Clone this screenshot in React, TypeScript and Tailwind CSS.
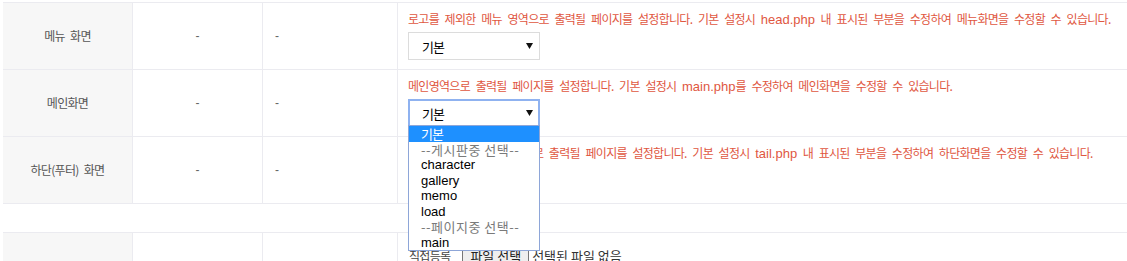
import React from "react";

const kr = "font-['Noto_Sans_CJK_KR',sans-serif]";

function L({ children }: { children: React.ReactNode }) {
  return <span className="font-['Liberation_Sans',sans-serif] text-[13px] tracking-normal [word-spacing:0px]">{children}</span>;
}

function Select({ focused }: { focused?: boolean }) {
  return (
    <div
      className={
        "flex h-[28px] w-[132px] items-center justify-between bg-white " +
        (focused ? "border-2 border-[#8fb2f0] pl-[12px] pr-[5px]" : "border border-[#dcdcdc] pl-[13px] pr-[6px]")
      }
    >
      <span className={`${kr} text-[13px] tracking-[-1px] text-black leading-none`}>기본</span>
      <svg width="7" height="6" viewBox="0 0 7 6">
        <path d="M0 0 L7 0 L3.5 6 Z" fill="#111" />
      </svg>
    </div>
  );
}

function Row({
  label,
  desc,
  focused,
}: {
  label: string;
  desc: React.ReactNode;
  focused?: boolean;
}) {
  return (
    <div className="flex h-[67px] border-b border-[#ebebf0]">
      <div
        className={`${kr} flex w-[130px] shrink-0 items-center justify-center border-r border-[#ebebf0] bg-[#f7f7f7] text-[12px] tracking-[-0.7px] [word-spacing:3.2px] text-[#555]`}
      >
        {label}
      </div>
      <div className="flex w-[130px] shrink-0 items-center justify-center border-r border-[#ebebf0] text-[12px] text-[#666] font-['Liberation_Sans',sans-serif]">
        -
      </div>
      <div className="flex w-[135px] shrink-0 items-center border-r border-[#ebebf0] pl-[12px] text-[12px] text-[#666] font-['Liberation_Sans',sans-serif]">
        -
      </div>
      <div className="flex flex-1 flex-col justify-center pl-[10px]">
        <div
          className={`${kr} whitespace-nowrap text-[12px] leading-[14px] tracking-[-0.7px] [word-spacing:3.6px] text-[#e0573f]`}
        >
          {desc}
        </div>
        <div className="mt-[5px]">
          <Select focused={focused} />
        </div>
      </div>
    </div>
  );
}

const options: { t: string; dim?: boolean; sel?: boolean; kr?: boolean }[] = [
  { t: "기본", sel: true, kr: true },
  { t: "--게시판중 선택--", dim: true, kr: true },
  { t: "character" },
  { t: "gallery" },
  { t: "memo" },
  { t: "load" },
  { t: "--페이지중 선택--", dim: true, kr: true },
  { t: "main" },
];

export default function App() {
  return (
    <div className="relative h-[261px] w-[1127px] overflow-hidden bg-white pl-[3px] pt-[2px]">
      <div className="border-t border-[#ebebf0]">
        <Row
          label="메뉴 화면"
          desc={
            <>
              로고를 제외한 메뉴 영역으로 출력될 페이지를 설정합니다. 기본 설정시 <L>head.php</L> 내 표시된 부분을 수정하여 메뉴화면을 수정할 수 있습니다.
            </>
          }
        />
        <Row
          label="메인화면"
          focused
          desc={
            <>
              메인영역으로 출력될 페이지를 설정합니다. 기본 설정시 <L>main.php</L>를 수정하여 메인화면을 수정할 수 있습니다.
            </>
          }
        />
        <Row
          label="하단(푸터) 화면"
          desc={
            <>
              로고를 제외한 하단영역으로 출력될 페이지를 설정합니다. 기본 설정시 <L>tail.php</L> 내 표시된 부분을 수정하여 하단화면을 수정할 수 있습니다.
            </>
          }
        />
      </div>
      <div className="mt-[28px] flex h-[67px] border-t border-[#ebebf0]">
        <div className="w-[130px] shrink-0 border-r border-[#ebebf0] bg-[#f7f7f7]" />
        <div className="w-[130px] shrink-0 border-r border-[#ebebf0]" />
        <div className="w-[135px] shrink-0 border-r border-[#ebebf0]" />
        <div className={`${kr} flex flex-1 items-start whitespace-nowrap pl-[11px] pt-[15px] leading-[15px] text-[#444]`}>
          <span className="text-[12px] tracking-[-0.7px]">직접등록</span>
          <span className="ml-[12px] border-x border-[#777] bg-[#efefef] px-[7px] text-[13px] text-[#222]">파일 선택</span>
          <span className="ml-[3px] text-[13px] text-[#333]">선택된 파일 없음</span>
        </div>
      </div>

      {/* open dropdown list */}
      <div className="absolute left-[408px] top-[125px] w-[132px] border border-[#8ea6d8] bg-white">
        {options.map((o, i) => (
          <div
            key={i}
            className={
              "flex h-[15.5px] items-center pl-[12px] whitespace-nowrap text-[13px] leading-none " +
              (o.kr ? `${kr} ` + (o.sel ? "tracking-[-1px] " : "tracking-[0.5px] ") : "font-['Liberation_Sans',sans-serif] ") +
              (o.sel ? "bg-[#1e90ff] text-white " : o.dim ? "text-[#7a7a7a] " : "text-black ")
            }
          >
            {o.t}
          </div>
        ))}
      </div>
    </div>
  );
}
